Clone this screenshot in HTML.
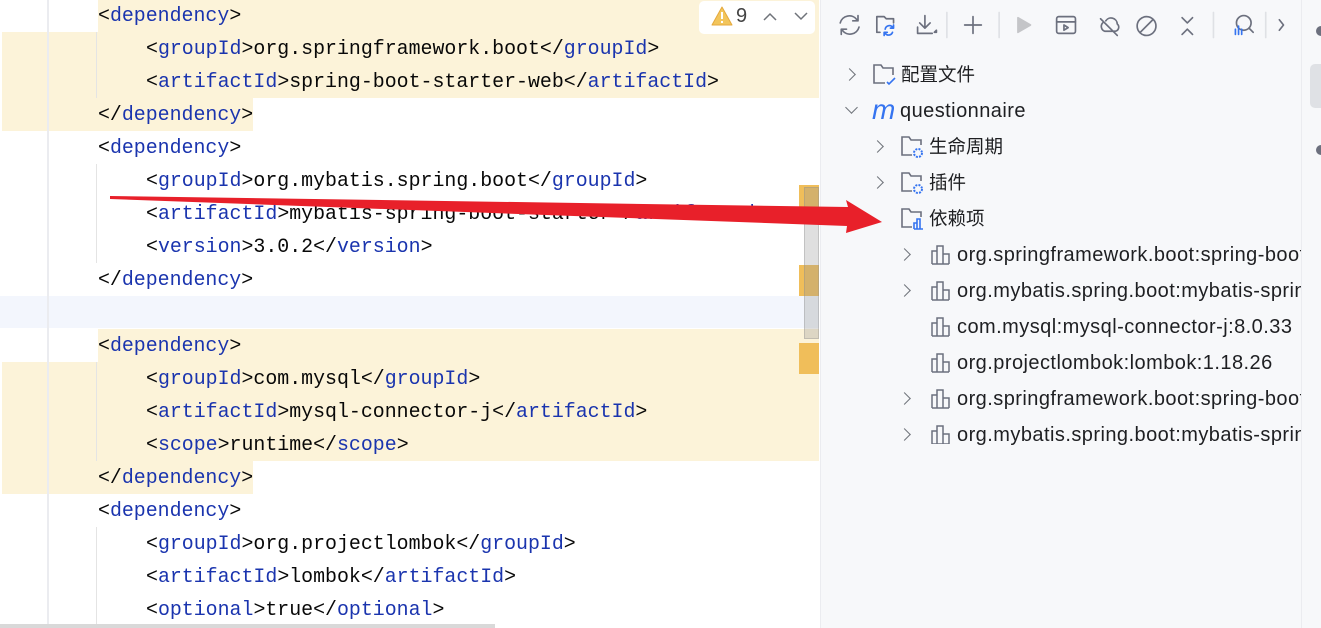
<!DOCTYPE html>
<html><head><meta charset="utf-8"><style>
*{margin:0;padding:0;box-sizing:border-box}
body{width:1321px;height:628px;overflow:hidden;background:#fff;position:relative;font-family:"Liberation Sans","Noto Sans CJK SC",sans-serif}
.hl{position:absolute;background:#fcf3d9}
.ln{position:absolute;left:0;height:33px;line-height:33px;font-family:"Liberation Mono",monospace;font-size:19.9px;color:#080808;white-space:pre}
.t{color:#1a34ae}
.tree{position:absolute;left:820px;top:0;width:481px;height:628px;background:#f7f8fa;border-left:1px solid #ebecf0;overflow:hidden}
.row{position:absolute;height:36px;line-height:36px;font-size:18.5px;color:#1e1f22;white-space:nowrap}
.lat{font-size:20px;letter-spacing:0.45px}
.chev{position:absolute;width:9px;height:9px;border-right:1.6px solid #6f737a;border-bottom:1.6px solid #6f737a}
.ico{position:absolute}
</style></head><body>
<div class="hl" style="left:98px;top:-1px;width:721px;height:33px"></div>
<div class="hl" style="left:2px;top:32px;width:817px;height:66px"></div>
<div class="hl" style="left:2px;top:98px;width:251px;height:33px"></div>
<div style="position:absolute;left:0;top:296px;width:819px;height:32px;background:#f3f6fd"></div>
<div class="hl" style="left:98px;top:329px;width:721px;height:33px"></div>
<div class="hl" style="left:2px;top:362px;width:817px;height:99px"></div>
<div class="hl" style="left:2px;top:461px;width:251px;height:33px"></div>
<div style="position:absolute;left:47px;top:0;width:2px;height:628px;background:#ebecf0"></div>
<div style="position:absolute;left:96px;top:32px;width:1px;height:66px;background:#e4e4e4"></div>
<div style="position:absolute;left:96px;top:164px;width:1px;height:99px;background:#e4e4e4"></div>
<div style="position:absolute;left:96px;top:362px;width:1px;height:99px;background:#e4e4e4"></div>
<div style="position:absolute;left:96px;top:527px;width:1px;height:101px;background:#e4e4e4"></div>

<div class="ln" style="top:-1px;left:98px">&lt;<span class="t">dependency</span>&gt;</div>
<div class="ln" style="top:32px;left:146px">&lt;<span class="t">groupId</span>&gt;org.springframework.boot&lt;/<span class="t">groupId</span>&gt;</div>
<div class="ln" style="top:65px;left:146px">&lt;<span class="t">artifactId</span>&gt;spring-boot-starter-web&lt;/<span class="t">artifactId</span>&gt;</div>
<div class="ln" style="top:98px;left:98px">&lt;/<span class="t">dependency</span>&gt;</div>
<div class="ln" style="top:131px;left:98px">&lt;<span class="t">dependency</span>&gt;</div>
<div class="ln" style="top:164px;left:146px">&lt;<span class="t">groupId</span>&gt;org.mybatis.spring.boot&lt;/<span class="t">groupId</span>&gt;</div>
<div class="ln" style="top:197px;left:146px">&lt;<span class="t">artifactId</span>&gt;mybatis-spring-boot-starter&lt;/<span class="t">artifactId</span>&gt;</div>
<div class="ln" style="top:230px;left:146px">&lt;<span class="t">version</span>&gt;3.0.2&lt;/<span class="t">version</span>&gt;</div>
<div class="ln" style="top:263px;left:98px">&lt;/<span class="t">dependency</span>&gt;</div>
<div class="ln" style="top:329px;left:98px">&lt;<span class="t">dependency</span>&gt;</div>
<div class="ln" style="top:362px;left:146px">&lt;<span class="t">groupId</span>&gt;com.mysql&lt;/<span class="t">groupId</span>&gt;</div>
<div class="ln" style="top:395px;left:146px">&lt;<span class="t">artifactId</span>&gt;mysql-connector-j&lt;/<span class="t">artifactId</span>&gt;</div>
<div class="ln" style="top:428px;left:146px">&lt;<span class="t">scope</span>&gt;runtime&lt;/<span class="t">scope</span>&gt;</div>
<div class="ln" style="top:461px;left:98px">&lt;/<span class="t">dependency</span>&gt;</div>
<div class="ln" style="top:494px;left:98px">&lt;<span class="t">dependency</span>&gt;</div>
<div class="ln" style="top:527px;left:146px">&lt;<span class="t">groupId</span>&gt;org.projectlombok&lt;/<span class="t">groupId</span>&gt;</div>
<div class="ln" style="top:560px;left:146px">&lt;<span class="t">artifactId</span>&gt;lombok&lt;/<span class="t">artifactId</span>&gt;</div>
<div class="ln" style="top:593px;left:146px">&lt;<span class="t">optional</span>&gt;true&lt;/<span class="t">optional</span>&gt;</div>

<div style="position:absolute;left:0;top:624px;width:495px;height:4px;background:#d9d9d9"></div>
<div style="position:absolute;left:699px;top:1px;width:116px;height:33px;background:#fff;border-radius:5px"></div>
<svg class="ico" style="left:711px;top:6px" width="22" height="20" viewBox="0 0 22 20"><path d="M11 1 L21 19 L1 19 Z" fill="#f2c55c" stroke="#e5a93c" stroke-linejoin="round"/><rect x="10" y="6" width="2" height="7" fill="#fff"/><rect x="10" y="15" width="2" height="2" fill="#fff"/></svg>
<div style="position:absolute;left:736px;top:5px;font-size:20px;color:#444">9</div>
<svg class="ico" style="left:763px;top:12px" width="14" height="9"><path d="M1 8 L7 2 L13 8" fill="none" stroke="#6f737a" stroke-width="1.5"/></svg>
<svg class="ico" style="left:794px;top:12px" width="14" height="9"><path d="M1 1 L7 7 L13 1" fill="none" stroke="#6f737a" stroke-width="1.5"/></svg>
<div style="position:absolute;left:799px;top:185px;width:20px;height:24px;background:#f0be5a"></div>
<div style="position:absolute;left:799px;top:265px;width:20px;height:31px;background:#f0be5a"></div>
<div style="position:absolute;left:799px;top:343px;width:20px;height:31px;background:#f0be5a"></div>
<div style="position:absolute;left:804px;top:187px;width:15px;height:152px;background:rgba(150,150,150,0.3);border:1px solid rgba(140,140,140,.35)"></div>

<div class="tree">
 <svg style="position:absolute;left:14px;top:7px" width="460" height="36" viewBox="0 0 440 30" fill="none" stroke="#6c707e" stroke-width="1.6" stroke-linecap="round" stroke-linejoin="round">
  <path d="M5 13 A9 9 0 0 1 21 10 M22 6 V11 H17 M23 17 A9 9 0 0 1 7 20 M6 24 V19 H11"/>
  <path d="M43 22 H40 V7 H47 L49 9 H56 V13"/>
  <path d="M48 19 A4 4 0 0 1 55 17 M56 15 V18 H53 M55 22 A4 4 0 0 1 48 23 M47 25 V22 H50" stroke="#3574f0"/>
  <path d="M86 6 V18 M81 13 L86 18 L91 13 M79 17 V23 H93"/>
  <path d="M95 22 L97 22 L97 20 Z" fill="#6c707e"/>
  <path d="M107 3 V27" stroke="#dfe1e5"/>
  <path d="M132 7 V23 M124 15 H140"/>
  <path d="M157 3 V27" stroke="#dfe1e5"/>
  <path d="M175 8 L187 15 L175 22 Z" fill="#c4c5c8" stroke="#c4c5c8"/>
  <rect x="212" y="7" width="18" height="16" rx="2"/><path d="M212 12 H230 M219 15 V20 L223 17.5 Z"/>
  <path d="M254 9 L270 25 M258 21 H268 A4 4 0 0 0 270 14 A6 6 0 0 0 259 11 M256 13 A5 5 0 0 0 258 21"/>
  <circle cx="298" cy="16" r="9"/><path d="M292 22 L304 10"/>
  <path d="M332 8 L337 13 L342 8 M332 24 L337 19 L342 24"/>
  <path d="M362 3 V27" stroke="#dfe1e5"/>
  <circle cx="391" cy="13" r="7"/><path d="M396 18 L400 22"/>
  <path d="M383 19 V24 M386 16 V24 M389 19 V24" stroke="#3574f0"/>
  <path d="M412 3 V27" stroke="#dfe1e5"/>
  <path d="M425 10 L429 15 L425 20"/>
 </svg>
 <div class="chev" style="left:24px;top:70px;transform:rotate(-45deg)"></div>
 <svg class="ico" style="left:51px;top:62px" width="26" height="26" fill="none" stroke="#6c707e" stroke-width="1.6"><path d="M13 21 H2 V3 H9 L11 6 H21 V13"/><path d="M15 20 L17 22 L23 16" stroke="#3574f0"/></svg>
 <div class="row" style="left:80px;top:57px">配置文件</div>

 <div class="chev" style="left:26px;top:103px;transform:rotate(45deg)"></div>
 <div class="row" style="left:51px;top:92px;font-style:italic;color:#3574f0;font-size:28px;line-height:36px">m</div>
 <div class="row lat" style="left:79px;top:93px">questionnaire</div>

 <div class="chev" style="left:52px;top:142px;transform:rotate(-45deg)"></div>
 <svg class="ico" style="left:79px;top:134px" width="26" height="26" fill="none" stroke="#6c707e" stroke-width="1.6"><path d="M12 21 H2 V3 H9 L11 6 H21 V11"/><circle cx="18" cy="19" r="4" stroke="#3574f0" stroke-width="2" stroke-dasharray="2 1.2"/></svg>
 <div class="row" style="left:108px;top:129px">生命周期</div>

 <div class="chev" style="left:52px;top:178px;transform:rotate(-45deg)"></div>
 <svg class="ico" style="left:79px;top:170px" width="26" height="26" fill="none" stroke="#6c707e" stroke-width="1.6"><path d="M12 21 H2 V3 H9 L11 6 H21 V11"/><circle cx="18" cy="19" r="4" stroke="#3574f0" stroke-width="2" stroke-dasharray="2 1.2"/></svg>
 <div class="row" style="left:108px;top:165px">插件</div>

 <svg class="ico" style="left:79px;top:206px" width="26" height="26" fill="none" stroke="#6c707e" stroke-width="1.6"><path d="M12 21 H2 V3 H9 L11 6 H21 V11"/><path d="M14 23 V17 H17 V23 M17 23 V13 H20 V23 M14 23 H23" stroke="#3574f0"/></svg>
 <div class="row" style="left:108px;top:201px">依赖项</div>

 <div class="chev" style="left:79px;top:250px;transform:rotate(-45deg)"></div>
 <div class="chev" style="left:79px;top:286px;transform:rotate(-45deg)"></div>
 <div class="chev" style="left:79px;top:394px;transform:rotate(-45deg)"></div>
 <div class="chev" style="left:79px;top:430px;transform:rotate(-45deg)"></div>
 <svg class="ico" style="left:110px;top:244px" width="22" height="200" fill="none" stroke="#6c707e" stroke-width="1.5">
  <g id="b"><path d="M1 20 V7 H6 V20 M6 20 V2 H12 V20 M12 20 V10 H18 V20 M1 20 H18"/></g>
  <use href="#b" y="36"/><use href="#b" y="72"/><use href="#b" y="108"/><use href="#b" y="144"/><use href="#b" y="180"/>
 </svg>
 <div class="row lat" style="left:136px;top:237px">org.springframework.boot:spring-boot-starter-web:3.1.5</div>
 <div class="row lat" style="left:136px;top:273px">org.mybatis.spring.boot:mybatis-spring-boot-starter:3.0.2</div>
 <div class="row lat" style="left:136px;top:309px">com.mysql:mysql-connector-j:8.0.33</div>
 <div class="row lat" style="left:136px;top:345px">org.projectlombok:lombok:1.18.26</div>
 <div class="row lat" style="left:136px;top:381px">org.springframework.boot:spring-boot-starter-test:3.1.5</div>
 <div class="row lat" style="left:136px;top:417px">org.mybatis.spring.boot:mybatis-spring-boot-starter-test</div>
</div>
<div style="position:absolute;left:1301px;top:0;width:20px;height:628px;background:#f7f8fa;border-left:1px solid #ebecf0"></div>
<div style="position:absolute;left:1310px;top:64px;width:11px;height:44px;background:#dfe1e5;border-radius:5px 0 0 5px"></div>
<div style="position:absolute;left:1316px;top:26px;width:5px;height:10px;background:#6c707e;border-radius:5px 0 0 5px"></div>
<div style="position:absolute;left:1316px;top:145px;width:5px;height:10px;background:#6c707e;border-radius:5px 0 0 5px"></div>
<svg style="position:absolute;left:0;top:0" width="1321" height="628"><polygon points="110,196 848,207 846,200 882,222 846,233 847,226 110,199" fill="#e8202a"/></svg>
</body></html>
